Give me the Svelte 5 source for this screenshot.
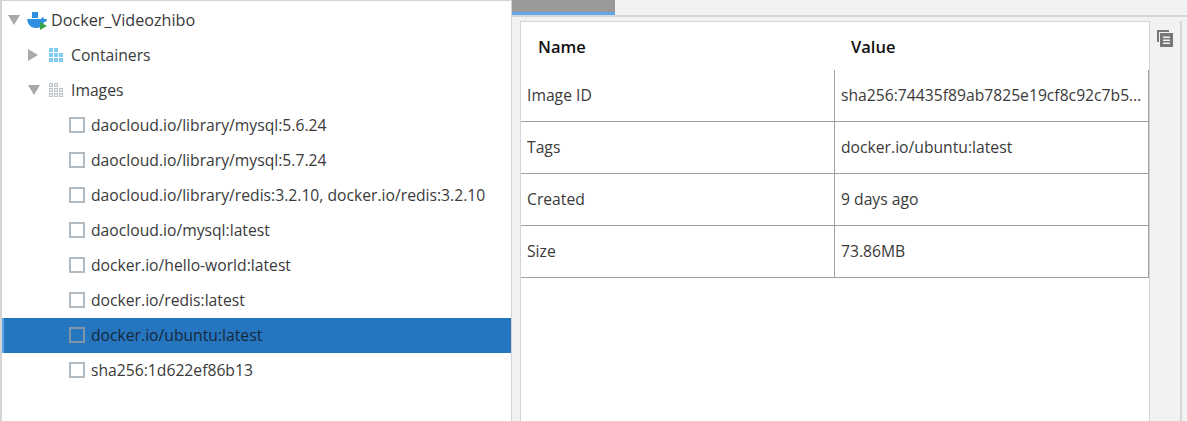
<script>
  const images = [
    'daocloud.io/library/mysql:5.6.24',
    'daocloud.io/library/mysql:5.7.24',
    'daocloud.io/library/redis:3.2.10, docker.io/redis:3.2.10',
    'daocloud.io/mysql:latest',
    'docker.io/hello-world:latest',
    'docker.io/redis:latest',
    'docker.io/ubuntu:latest',
    'sha256:1d622ef86b13'
  ];
  const rows = [
    ['Image ID', 'sha256:74435f89ab7825e19cf8c92c7b5…'],
    ['Tags', 'docker.io/ubuntu:latest'],
    ['Created', '9 days ago'],
    ['Size', '73.86MB']
  ];
  const cells = [[0, 0], [5, 0], [0, 5], [5, 5], [10, 5], [0, 10], [5, 10], [10, 10]];
</script>

<div class="app">
  <aside class="tree">
    <div class="row root">
      <span class="tri down"></span>
      <svg class="whale" width="20" height="18" viewBox="0 0 20 18">
        <rect x="5" y="0" width="6" height="6" fill="#2f8fe0"/>
        <path d="M0 7h14c1-1 1-2 2-2l1 2h3c0 2-1 3-3 3-1 4-4 6-8 6-5 0-8-3-9-9z" fill="#2f8fe0"/>
        <path d="M13 10l7 4-7 4z" fill="#3aa648"/>
      </svg>
      <span class="rootname">Docker_Videozhibo</span>
    </div>
    <div class="row l1">
      <span class="tri right"></span>
      <svg class="cells" width="14" height="14" viewBox="0 0 14 14">
        {#each cells as [x, y]}
          <rect {x} {y} width="4" height="4" fill="#7ccdf0"/>
        {/each}
      </svg>
      <span>Containers</span>
    </div>
    <div class="row l1">
      <span class="tri down"></span>
      <svg class="cells" width="14" height="14" viewBox="0 0 14 14">
        {#each cells as [x, y]}
          <rect x={x + 0.500} y={y + 0.500} width="3" height="3" fill="#eef0f1" stroke="#bcc3c8"/>
        {/each}
      </svg>
      <span>Images</span>
    </div>
    {#each images as name}
      <div class="row leaf" class:selected={name === 'docker.io/ubuntu:latest'}>
        <span class="box"></span>
        <span>{name}</span>
      </div>
    {/each}
  </aside>

  <main class="detail">
    <div class="tabs">
      <div class="tab"></div>
    </div>
    <div class="body">
      <section class="panel">
        <div class="head">
          <div class="hname">Name</div>
          <div class="hvalue">Value</div>
        </div>
        <div class="table">
          {#each rows as [k, v]}
            <div class="trow">
              <div class="key">{k}</div>
              <div class="val">{v}</div>
            </div>
          {/each}
        </div>
      </section>
      <div class="gutter">
        <svg width="16" height="17" viewBox="0 0 16 17">
          <path d="M0 0h12v2H2v10H0z" fill="#777"/>
          <path fill-rule="evenodd" d="M3 3h13v14H3zM6 6.500v1.500h7V6.500zM6 9.500v1.500h7V9.500zM6 12.500V14h7v-1.500z" fill="#777"/>
        </svg>
      </div>
    </div>
  </main>
</div>

<style>
  :global(body) { margin: 0; background: #fff; }
  .app {
    display: flex;
    width: 1187px;
    height: 421px;
    overflow: hidden;
    font-family: "Open Sans", "Liberation Sans", sans-serif;
    font-size: 15.700px;
    color: #3a3a3a;
  }
  .tree {
    flex: none;
    box-sizing: border-box;
    border-left: 2px solid #d4d4d4;
    border-top: 1px solid #d4d4d4;
    border-right: 1px solid #d4d4d4;
    width: 512px;
    padding-top: 2px;
  }
  .row {
    display: flex;
    align-items: center;
    height: 35px;
    padding-bottom: 1px;
    box-sizing: border-box;
    white-space: nowrap;
  }
  .root { padding-left: 6px; }
  .rootname { font-size: 16.200px; }
  .l1 { padding-left: 26px; }
  .leaf { padding-left: 67px; }
  .selected { background: #2675bf; color: #16283a; box-shadow: inset 2px 0 0 #5ba6e8; }
  .tri { display: block; flex: none; width: 0; height: 0; }
  .tri.down {
    border-left: 6px solid transparent;
    border-right: 6px solid transparent;
    border-top: 10px solid #a9a9a9;
  }
  .tri.right {
    border-top: 6px solid transparent;
    border-bottom: 6px solid transparent;
    border-left: 10px solid #a9a9a9;
    margin-right: 2px;
  }
  .whale { margin: 1px 4px 0 7px; flex: none; }
  .cells { margin: 0 8px 0 9px; flex: none; }
  .box {
    width: 12px;
    height: 12px;
    border: 2px solid #b1bac1;
    margin-right: 6px;
    flex: none;
  }
  .selected .box { border-color: #7f95aa; }
  .detail {
    flex: 1;
    display: flex;
    flex-direction: column;
    background: #f2f2f2;
  }
  .tabs {
    height: 15px;
    flex: none;
    border-bottom: 2px solid #d6d6d6;
  }
  .tab {
    width: 103px;
    height: 12px;
    background: #999;
    border-bottom: 3px solid #5fa8ee;
  }
  .body {
    flex: 1;
    display: flex;
    padding: 4px 0 0 8px;
  }
  .panel {
    width: 630px;
    flex: none;
    background: #fff;
    border-top: 1px solid #d4d4d4;
    border-left: 1px solid #d4d4d4;
    border-right: 1px solid #d4d4d4;
    box-sizing: border-box;
  }
  .head {
    display: flex;
    height: 48px;
    align-items: center;
    font-weight: 600;
    font-size: 16.500px;
    color: #111;
  }
  .hname { width: 314px; padding-left: 17px; box-sizing: border-box; }
  .hvalue { padding-left: 16px; }
  .trow {
    display: flex;
    height: 52px;
    box-sizing: border-box;
    border-bottom: 1px solid #a0a0a0;
  }
  .key {
    width: 314px;
    flex: none;
    display: flex;
    align-items: center;
    padding-left: 6px;
    padding-bottom: 1px;
    box-sizing: border-box;
    border-right: 1px solid #a0a0a0;
  }
  .val {
    flex: 1;
    display: flex;
    align-items: center;
    padding-left: 6px;
    padding-bottom: 1px;
    border-right: 1px solid #a0a0a0;
    white-space: nowrap;
    overflow: hidden;
  }
  .gutter {
    width: 30px;
    flex: none;
    border-right: 2px solid #d6d6d6;
    padding-top: 9px;
    display: flex;
    justify-content: center;
    align-items: flex-start;
  }
</style>
